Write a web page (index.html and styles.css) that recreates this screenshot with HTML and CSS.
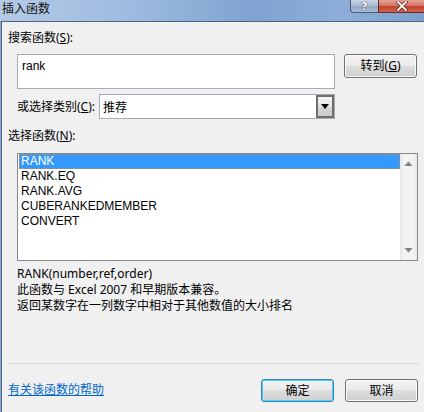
FILE: index.html
```html
<!DOCTYPE html>
<html lang="zh-CN">
<head>
<meta charset="utf-8">
<title>插入函数</title>
<link rel="stylesheet" href="styles.css">
</head>
<body>
<div class="window">
  <div class="titlebar">
    <span class="title">插入函数</span>
    <div class="caption-btns">
      <div class="cap help">?</div>
      <div class="cap close">
        <svg width="12" height="10" viewBox="0 0 12 10"><path d="M2 1 L10 9 M10 1 L2 9" stroke="#5a2018" stroke-width="3.2" stroke-linecap="square"/><path d="M2 1 L10 9 M10 1 L2 9" stroke="#ffffff" stroke-width="1.8" stroke-linecap="square"/></svg>
      </div>
    </div>
  </div>
  <div class="client">
    <div class="label first">搜索函数(<u>S</u>):</div>
    <div class="search-row">
      <div class="textbox">rank</div>
      <div class="btn goto">转到(<u>G</u>)</div>
    </div>
    <div class="cat-row">
      <div class="cat-label">或选择类别(<u>C</u>):</div>
      <div class="combo">
        <span class="combo-text">推荐</span>
        <div class="combo-btn">
          <svg width="8" height="5" viewBox="0 0 8 5"><path d="M0 0 H8 L4 5 Z" fill="#000"/></svg>
        </div>
      </div>
    </div>
    <div class="label second">选择函数(<u>N</u>):</div>
    <div class="listbox">
      <div class="items">
        <div class="item selected">RANK</div>
        <div class="item">RANK.EQ</div>
        <div class="item">RANK.AVG</div>
        <div class="item">CUBERANKEDMEMBER</div>
        <div class="item">CONVERT</div>
      </div>
      <div class="scrollbar">
        <svg width="9" height="6" viewBox="0 0 9 6"><path d="M4.5 0 L9 5 H0 Z" fill="#a8a8a8"/><path d="M4.5 1.5 L7.5 5 H1.5 Z" fill="#7a7a7a"/></svg>
        <svg width="9" height="6" viewBox="0 0 9 6"><path d="M0 0 H9 L4.5 5 Z" fill="#a8a8a8"/><path d="M1.5 0 H7.5 L4.5 3.5 Z" fill="#7a7a7a"/></svg>
      </div>
    </div>
    <div class="desc">
      <div>RANK(number,ref,order)</div>
      <div>此函数与 Excel 2007 和早期版本兼容。</div>
      <div>返回某数字在一列数字中相对于其他数值的大小排名</div>
    </div>
    <div class="sep"></div>
    <div class="bottom-row">
      <a class="help-link" href="#">有关该函数的帮助</a>
      <div class="btns">
        <div class="btn ok">确定</div>
        <div class="btn cancel">取消</div>
      </div>
    </div>
  </div>
</div>
</body>
</html>
```
FILE: styles.css
```css
html, body {
  margin: 0;
  padding: 0;
  width: 424px;
  height: 412px;
  overflow: hidden;
  background: #f0f0f0;
}
body {
  font-family: "Noto Sans", "Noto Sans CJK SC", sans-serif;
  font-size: 12px;
  color: #000;
}
.window {
  width: 424px;
  height: 412px;
  display: flex;
  flex-direction: column;
  background: #8aaad4;
}
.titlebar {
  height: 21px;
  display: flex;
  align-items: flex-start;
  background: linear-gradient(90deg, #b3c9e6 0%, #9fbce0 30%, #7fa2d0 60%, #8eaed8 80%, #7d9fcd 100%);
  flex-shrink: 0;
}
.title {
  font-family: "Noto Sans CJK SC", sans-serif;
  font-size: 12px;
  line-height: 14px;
  margin: 1px 0 0 2px;
  color: #111;
}
.caption-btns {
  margin-left: auto;
  display: flex;
}
.cap {
  height: 13px;
  box-sizing: border-box;
  display: flex;
  align-items: center;
  justify-content: center;
}
.help {
  width: 28px;
  border: 1px solid #4b5d76;
  border-top: none;
  border-right: none;
  border-radius: 0 0 0 4px;
  background: linear-gradient(#c9d6e6, #a7b9d1 50%, #93a8c5 51%, #aabdd6);
  color: #fff;
  font-family: "DejaVu Sans", sans-serif;
  font-weight: bold;
  font-size: 11px;
  line-height: 11px;
  text-shadow: 0 0 1px #333, 0 0 1px #333;
}
.close {
  width: 46px;
  border-left: 1px solid #6b2a22;
  border-bottom: 1px solid #6b2a22;
  background: linear-gradient(#e5a394, #d2705e 50%, #c2422e 51%, #d0614c);
}
.client {
  flex: 1;
  margin-left: 1px;
  border-left: 1px solid #4d6485;
  border-top: 1px solid #4d6485;
  background: #f0f0f0;
  padding: 0 0 0 6px;
  display: flex;
  flex-direction: column;
}
.label {
  line-height: 14px;
  height: 14px;
  font-family: "Noto Sans", "Noto Sans CJK SC", sans-serif;
}
.label.first { margin-top: 9px; }
.label.second { margin-top: 10px; }
u { text-decoration: underline; text-underline-offset: 1px; }
.search-row {
  margin-top: 9px;
  margin-left: 9px;
  display: flex;
  align-items: flex-start;
}
.textbox {
  width: 318px;
  height: 35px;
  box-sizing: border-box;
  border: 1px solid #a5acb5;
  background: #fff;
  font-family: "Liberation Sans", "Noto Sans CJK SC", sans-serif;
  font-size: 12px;
  line-height: 14px;
  padding: 4px 0 0 4px;
}
.btn {
  box-sizing: border-box;
  height: 24px;
  width: 73px;
  border: 1px solid #707070;
  border-radius: 3px;
  background: linear-gradient(#f2f2f2 0%, #ebebeb 48%, #dddddd 50%, #cfcfcf 100%);
  box-shadow: inset 0 0 0 1px #fbfbfb;
  display: flex;
  align-items: center;
  justify-content: center;
  font-family: "Noto Sans", "Noto Sans CJK SC", sans-serif;
  font-size: 12px;
  line-height: 14px;
}
.goto { margin-left: 9px; }
.cat-row {
  margin-top: 5px;
  margin-left: 9px;
  display: flex;
  align-items: center;
  height: 25px;
}
.cat-label {
  width: 82px;
  line-height: 14px;
}
.combo {
  width: 236px;
  height: 25px;
  box-sizing: border-box;
  border: 1px solid #a5acb5;
  background: #fff;
  display: flex;
  align-items: center;
}
.combo-text {
  flex: 1;
  padding-left: 3px;
  font-family: "Noto Sans CJK SC", sans-serif;
}
.combo-btn {
  width: 18px;
  height: 23px;
  box-sizing: border-box;
  border: 2px solid #6f6f6f;
  background: linear-gradient(#f4f4f4, #e4e4e4 50%, #d6d6d6 51%, #cdcdcd);
  display: flex;
  align-items: center;
  justify-content: center;
}
.listbox {
  margin-top: 10px;
  margin-left: 9px;
  width: 401px;
  height: 108px;
  box-sizing: border-box;
  border: 1px solid #828790;
  background: #fff;
  display: flex;
}
.items {
  flex: 1;
  padding: 0 0 0 1px;
  font-family: "Liberation Sans", sans-serif;
  font-size: 12px;
}
.item {
  height: 15px;
  line-height: 15px;
  padding-left: 2px;
}
.item.selected {
  background: #3399ff;
  color: #fff;
  box-sizing: border-box;
  outline: 1px dotted #c98a3a;
  outline-offset: -1px;
}
.scrollbar {
  width: 17px;
  background: linear-gradient(90deg, #e6e6e6, #f2f2f2 20%, #f2f2f2 80%, #e8e8e8);
  display: flex;
  flex-direction: column;
  justify-content: space-between;
  align-items: center;
  padding: 7px 0 6px 0;
  box-sizing: border-box;
}
.desc {
  margin-top: 5px;
  margin-left: 9px;
  line-height: 16px;
  font-family: "Noto Sans", "Noto Sans CJK SC", sans-serif;
}
.sep {
  margin-top: 49px;
  width: 411px;
  height: 1px;
  background: #d5dde4;
}
.bottom-row {
  margin-top: 15px;
  display: flex;
  align-items: center;
  width: 410px;
}
.help-link {
  color: #0066cc;
  text-decoration: underline;
  font-family: "Noto Sans CJK SC", sans-serif;
  line-height: 14px;
  margin-top: -4px;
}
.btns {
  margin-left: auto;
  display: flex;
  gap: 11px;
}
.btns .btn { height: 23px; width: 73px; }
.btn.ok {
  border-color: #3c7fb1;
  box-shadow: inset 0 0 0 1px #48d1fa;
}
```
